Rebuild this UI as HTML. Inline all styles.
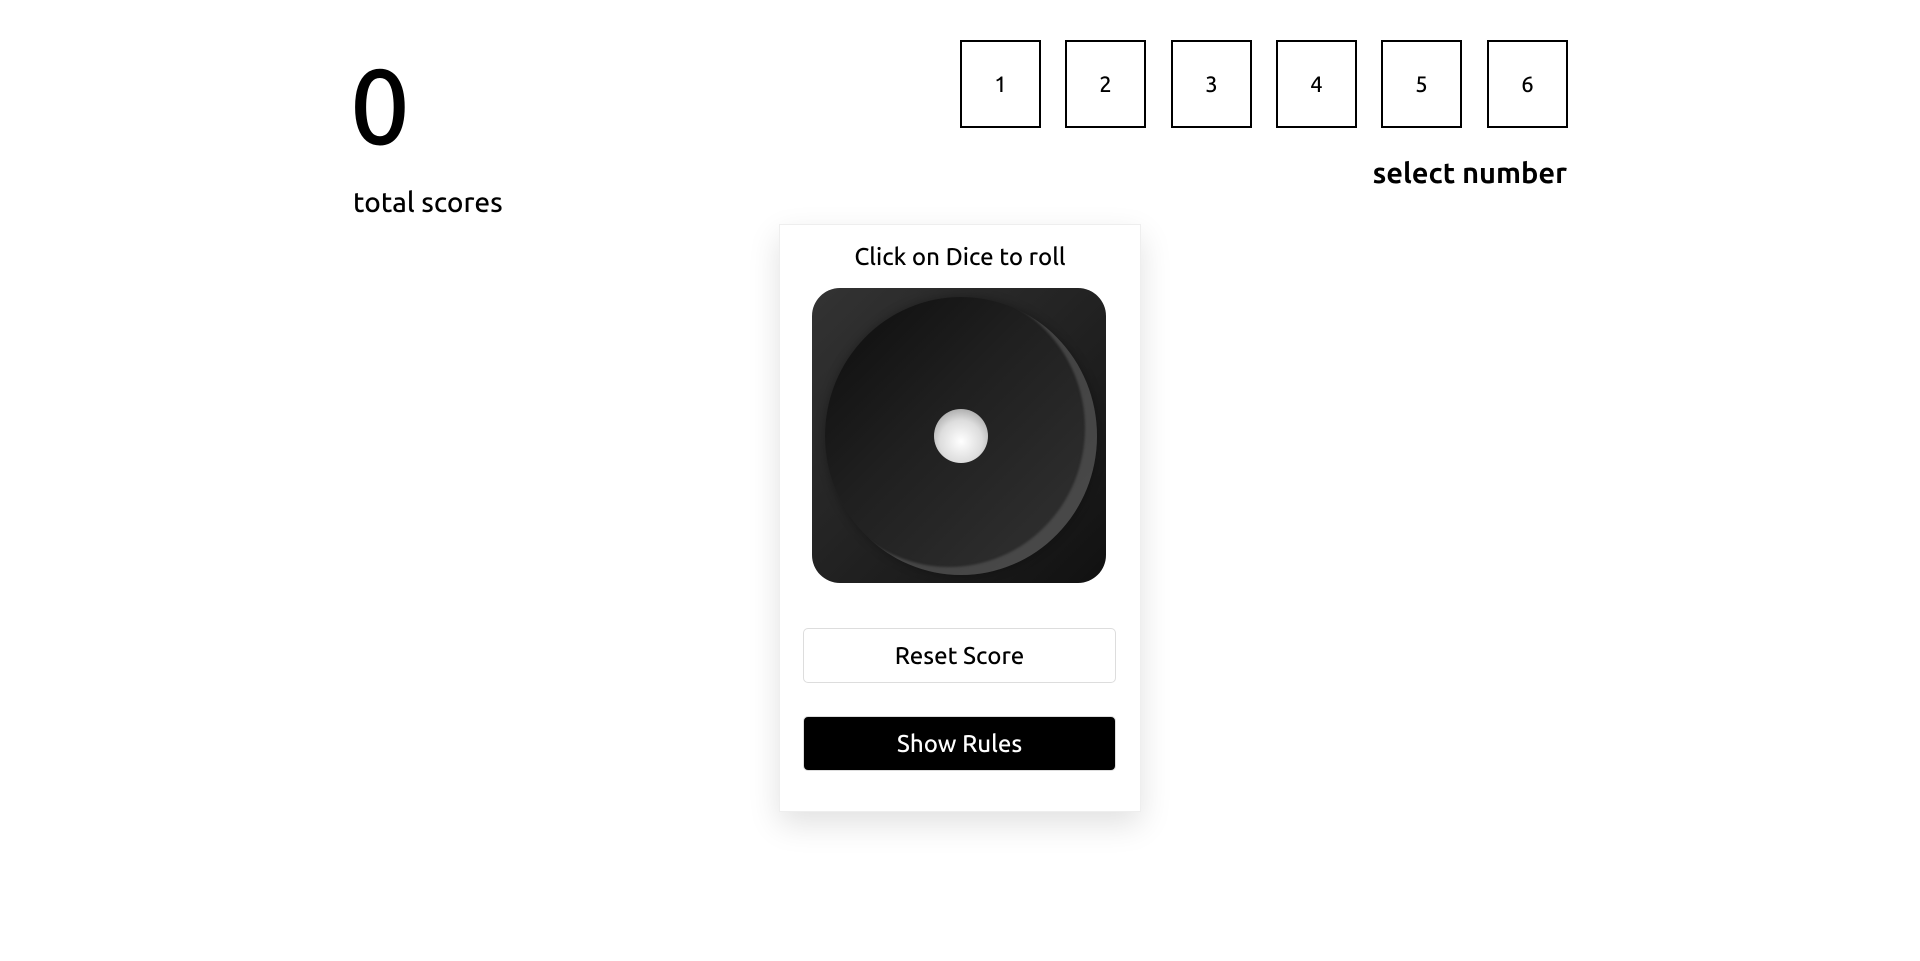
<!DOCTYPE html>
<html><head><meta charset="utf-8"><style>
html,body{margin:0;padding:0;background:#fff;width:1920px;height:961px;overflow:hidden;font-family:"Ubuntu","Liberation Sans",sans-serif;color:#000}
.abs{position:absolute}
.zero{left:350px;top:46px;font-size:106px;line-height:120px;font-weight:500}
.ts{left:353px;top:187px;font-size:28px;font-weight:500}
.box{position:absolute;top:40px;width:77px;height:84px;border:2px solid #000;display:flex;align-items:center;justify-content:center;font-size:22px;font-weight:500}
.sn{right:353px;top:157px;font-size:29px;font-weight:700}
.card{left:779px;top:224px;width:360px;height:586px;border:1px solid #eee;box-shadow:0 12px 30px rgba(0,0,0,0.12);background:#fff}
.title{left:779px;width:362px;top:243px;text-align:center;font-size:24px;font-weight:500}
.dice{left:812px;top:288px;width:294px;height:295px;border-radius:28px;background:linear-gradient(135deg,#333 0%,#222 50%,#111 100%);overflow:hidden}
.disc{position:absolute;left:13px;top:9px;width:272px;height:278px;border-radius:50%;background:linear-gradient(135deg,#0d0d0d 0%,#1f1f1f 40%,#333 100%);box-shadow:inset -12px -8px 2px rgba(90,90,90,0.6), 0 0 10px rgba(0,0,0,0.3)}
.pip{position:absolute;left:109px;top:112px;width:54px;height:54px;border-radius:50%;background:radial-gradient(circle at 50% 60%,#fff 0%,#ddd 50%,#888 100%)}
.btn{position:absolute;left:803px;width:311px;height:53px;border-radius:5px;display:flex;align-items:center;justify-content:center;font-size:24px;font-weight:500}
.reset{top:628px;border:1px solid #ddd;background:#fff}
.rules{top:716px;background:#000;color:#fff;border:1px solid #ddd}
</style></head><body>
<div class="abs zero">0</div>
<div class="abs ts">total scores</div>
<div class="box" style="left:960px">1</div>
<div class="box" style="left:1065px">2</div>
<div class="box" style="left:1171px">3</div>
<div class="box" style="left:1276px">4</div>
<div class="box" style="left:1381px">5</div>
<div class="box" style="left:1487px">6</div>
<div class="abs sn">select number</div>
<div class="abs card"></div>
<div class="abs title">Click on Dice to roll</div>
<div class="abs dice"><div class="disc"><div class="pip"></div></div></div>
<div class="btn reset">Reset Score</div>
<div class="btn rules">Show Rules</div>
</body></html>
